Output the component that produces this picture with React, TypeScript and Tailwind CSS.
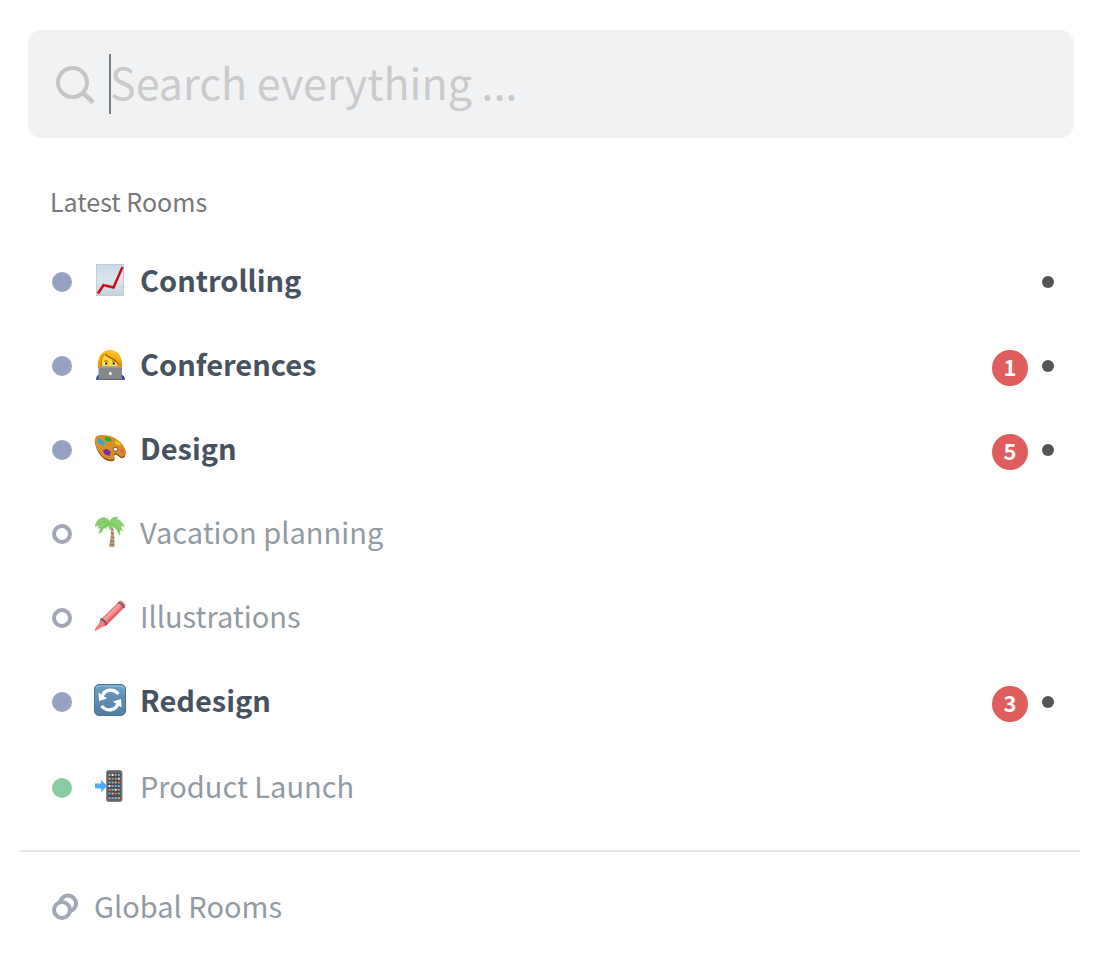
import type { ReactNode } from 'react';

type Status = 'team' | 'open' | 'live';

type Room = {
  name: string;
  status: Status;
  icon: ReactNode;
  unread?: boolean;
  mentions?: number;
};

const ChartIcon = () => (
  <svg viewBox="0 0 32 32" className="size-8 shrink-0" aria-hidden="true">
    <defs>
      <linearGradient id="chart-paper" x1="0" y1="0" x2="0" y2="1">
        <stop offset="0" stopColor="#c6d9e8" />
        <stop offset="0.5" stopColor="#dde7ef" />
        <stop offset="1" stopColor="#c3d0da" />
      </linearGradient>
    </defs>
    <rect x="2.5" y="0.5" width="27" height="31" fill="url(#chart-paper)" stroke="#c3cdd6" strokeWidth="1" />
    <path d="M9.5 1v30M16.500 1v30M23.500 1v30M3 8h26M3 16h26M3 24h26" stroke="#cfdae4" strokeWidth="0.5" />
    <path d="M4 29.500L9.500 21L19.500 23.500L28.500 3" fill="none" stroke="#cc0711" strokeWidth="2.400" />
  </svg>
);

const TechnologistIcon = () => (
  <svg viewBox="0 0 32 32" className="size-8 shrink-0" aria-hidden="true">
    <defs>
      <linearGradient id="hair" x1="0" y1="0" x2="0" y2="1">
        <stop offset="0" stopColor="#ffc928" />
        <stop offset="1" stopColor="#e58a00" />
      </linearGradient>
    </defs>
    <path d="M4 20C3 10 7 2 15.500 2C25 2 29 10 28 20z" fill="url(#hair)" />
    <path d="M7.500 18C6.500 11 9 8 11 7C14 11 21 10 24 16L23.500 20H8z" fill="#ffd83c" />
    <path d="M11 6C15 11 22 10 24.500 17" fill="none" stroke="#ad5b00" strokeWidth="1.300" />
    <path d="M10 6.500C7.500 9 7 13 7.500 18" fill="none" stroke="#bd6d00" strokeWidth="1" />
    <path d="M10 13.500q2-1.500 4 0M18 13.500q2-1.500 4 0" stroke="#a96800" fill="none" />
    <ellipse cx="12" cy="15.500" rx="1.900" ry="1.500" fill="#fff" />
    <ellipse cx="20" cy="15.500" rx="1.900" ry="1.500" fill="#fff" />
    <circle cx="12.200" cy="15.500" r="1.200" fill="#342517" />
    <circle cx="19.800" cy="15.500" r="1.200" fill="#342517" />
    <path d="M2 32Q2 27 6 26V32zM31 32Q31 27 26 26V32z" fill="#3148ad" />
    <rect x="4.500" y="18.500" width="23.500" height="13.500" rx="1.200" fill="#85878b" />
    <path d="M5 19h22.500" stroke="#a8aaac" />
    <ellipse cx="16.300" cy="25.500" rx="1.500" ry="1.700" fill="#eff1f2" />
    <path d="M3 31.500h26" stroke="#696b6f" />
  </svg>
);

const PaletteIcon = () => (
  <svg viewBox="0 0 32 32" className="size-8 shrink-0" aria-hidden="true">
    <path
      d="M1 10C0 5 5 3 10 3.500C19 4 28 10 31 18C33 24 30 27 27 26C24 25 24 22 21 23C18 24 23 28 19 29C10 31 2 20 1 10z"
      fill="#8f4c0c"
    />
    <path
      d="M1 9C0 4 5 2.500 10 3C19 3.500 28 9 31 17C33 22 30 25.500 27 24.500C24 23.500 24 20.500 21 21.500C18 23 23 26.500 19 27.500C10 29 2 19 1 9z"
      fill="#d68e2b"
    />
    <ellipse cx="21.500" cy="17.300" rx="2.500" ry="2" fill="#fff" stroke="#8f4c0c" />
    <path d="M3 9l2-2.500 3 1.500 3 3-1 2.500-4-1.500z" fill="#26a9d8" />
    <path d="M10 6.500l2.500-2 4.500 2 .5 3-4.500 0z" fill="#1fae22" />
    <path d="M20 10l3-1.500 3.500 3 0 2.500-4-1z" fill="#f6bf18" />
    <path d="M25.500 17l3.500 0 2 4-2.500 1z" fill="#f2604c" />
    <path d="M9 18l4-1 4 3-1.500 4-5-2z" fill="#7d26ad" />
  </svg>
);

const PalmIcon = () => (
  <svg viewBox="0 0 32 32" className="size-8 shrink-0" aria-hidden="true">
    <path d="M16 9C18 16 16.500 23 15 31h5.500C21 23 20 15 18 9z" fill="#bba080" />
    <path d="M17.500 13l2 .5M17 17l3 .5M17 21l3 .5M16 25l4 .5M16 28.500l4 .5" stroke="#806951" strokeWidth="1" />
    <path
      d="M16 5C13 1 8 0 5 3C2 5 1 8 1 11L5 9.500L3 13L6 12L4.500 18L8 16L10 12L12 13L14 10L16 14L19 11L22 13L24 17L26 20L26 14L29 16L27 10L31 11C29 7 27 4 23 3L24 1C20 0 17 2 16 5z"
      fill="#8bd06e"
    />
    <path d="M16 8C12 4 7 5 3 10M16 8C11 9 8 12 6 16M17 8C22 9 25 13 26 17" fill="none" stroke="#6dbb59" strokeWidth="0.800" />
  </svg>
);

const CrayonIcon = () => (
  <svg viewBox="0 0 32 32" className="size-8 shrink-0" aria-hidden="true">
    <path d="M6 20L25 1.500Q26 0 28 1L31 4Q32 6 31 7L12 26L8 27L5 29L1 31L1 29L3 26L5 24z" fill="#f27b7e" />
    <path d="M8 20L26 2.500L28 4.500L10 22z" fill="#f99b9d" />
    <path d="M11 25L29 7" stroke="#dc5e65" strokeWidth="1.500" />
    <path d="M6.500 19Q11 20 12.500 25M24 2.500Q29 4 30 8" fill="none" stroke="#70575f" strokeWidth="1.800" />
  </svg>
);

const RefreshIcon = () => (
  <svg viewBox="0 0 32 32" className="size-8 shrink-0" aria-hidden="true">
    <defs>
      <linearGradient id="button-face" x1="0" y1="0" x2="0" y2="1">
        <stop offset="0" stopColor="#6ba0c6" />
        <stop offset="1" stopColor="#4f7da3" />
      </linearGradient>
    </defs>
    <rect x="0.5" y="0.5" width="31" height="31" rx="4.500" fill="url(#button-face)" stroke="#477397" />
    <path d="M2 5Q2 2 5 2H27Q30 2 30 5" fill="none" stroke="#91bfdf" />
    <path d="M8 13C10 5 19 4 24.500 10" fill="none" stroke="#fff" strokeWidth="3.300" />
    <path d="M4.500 8.500L5 17L13 14.500z" fill="#fff" />
    <path d="M24 19C22 27 13 28 7.500 22" fill="none" stroke="#fff" strokeWidth="3.300" />
    <path d="M27.500 23.500L27 15L19 17.500z" fill="#fff" />
  </svg>
);

const appColors = ['#60d38c', '#65c9ee', '#f2f2f2', '#ebb173', '#bd8ece', '#ef7168', '#58bce9'];

const PhoneIcon = () => (
  <svg viewBox="0 0 32 32" className="size-8 shrink-0" aria-hidden="true">
    <rect x="12.500" y="0.500" width="15.500" height="31" rx="2" fill="#666465" stroke="#858383" />
    <rect x="14" y="3.500" width="12.500" height="24.500" fill="#4d4d50" />
    {[5, 8.700, 12.400, 16.100, 19.800, 23.500, 28].map((y, row) => (
      <g key={y}>
        {[0, 1, 2, 3].map((col) => (
          <rect
            key={col}
            x={14.500 + col * 3.100}
            y={y - 1}
            width="2"
            height="2"
            rx="0.400"
            fill={appColors[(row * 3 + col * 2) % 7]}
          />
        ))}
      </g>
    ))}
    <path d="M1 13.500H7V10L13.500 16L7 22V18.500H1z" fill="#52adf5" />
  </svg>
);

const rooms: Room[] = [
  { name: 'Controlling', status: 'team', icon: <ChartIcon />, unread: true },
  { name: 'Conferences', status: 'team', icon: <TechnologistIcon />, unread: true, mentions: 1 },
  { name: 'Design', status: 'team', icon: <PaletteIcon />, unread: true, mentions: 5 },
  { name: 'Vacation planning', status: 'open', icon: <PalmIcon /> },
  { name: 'Illustrations', status: 'open', icon: <CrayonIcon /> },
  { name: 'Redesign', status: 'team', icon: <RefreshIcon />, unread: true, mentions: 3 },
  { name: 'Product Launch', status: 'live', icon: <PhoneIcon /> },
];

const statusStyles: Record<Status, string> = {
  team: 'bg-[#96a3c0]',
  open: 'border-4 border-[#a1a8b3]',
  live: 'bg-[#89cca4]',
};

function RoomRow({ room }: { room: Room }) {
  return (
    <li className="last:pt-[2px]">
      <a href="#room" className="flex h-[84px] items-center">
        <span className={`size-5 shrink-0 rounded-full ${statusStyles[room.status]}`} />
        <span className="-mt-1 ml-[22px] flex">{room.icon}</span>
        <span
          className={`ml-[14px] grow pb-[6px] text-[29px] leading-10 ${
            room.unread ? 'font-bold text-[#475260]' : 'text-[#939ba2]'
          }`}
        >
          {room.name}
        </span>
        {room.mentions && (
          <span className="mt-1 flex size-9 items-center justify-center rounded-full bg-[#e05d5d] pb-1 text-[22px] leading-8 font-bold text-white">
            {room.mentions}
          </span>
        )}
        {room.unread && <span className="ml-[14px] size-3 rounded-full bg-[#555]" />}
      </a>
    </li>
  );
}

export default function App() {
  return (
    <main className="min-h-screen bg-white px-5 pt-[30px] pb-8 font-['Noto_Sans_CJK_SC',sans-serif]">
      <label className="mr-[6px] ml-2 flex h-[108px] items-center rounded-[14px] bg-[#f1f2f4] pr-6 pl-[27px]">
        <svg viewBox="0 0 40 40" className="size-10 shrink-0" fill="none" stroke="#c5c5c5" strokeWidth="4" aria-hidden="true">
          <circle cx="17.500" cy="18.500" r="14.500" />
          <path d="M27.500 28.500L38.300 38.500" strokeWidth="4.500" />
        </svg>
        <span className="relative ml-[15px] flex grow items-center">
          <span className="absolute -left-px h-[60px] w-[2px] bg-[#777b7e]" />
          <input
            type="text"
            aria-label="Search everything"
            placeholder="Search everything ..."
            className="h-[60px] w-full bg-transparent pb-[6px] text-[43px] text-[#475260] caret-transparent outline-none placeholder:text-[#cbcbcb]"
          />
        </span>
      </label>
      <section>
        <h2 className="mt-[43px] ml-[30px] text-[25px] leading-10 text-[#777]">Latest Rooms</h2>
        <ul className="mt-[19px] mr-[26px] mb-5 ml-8">
          {rooms.map((room) => (
            <RoomRow key={room.name} room={room} />
          ))}
        </ul>
      </section>
      <a href="#global" className="flex items-center border-t-2 border-[#e4e6ea] pt-[33px] pl-8 text-[29px] leading-10 text-[#939ba2]">
        <svg viewBox="0 0 28 28" className="mr-[14px] size-7 shrink-0" fill="none" stroke="#a1a8b3" strokeWidth="4" aria-hidden="true">
          <circle cx="16" cy="10.500" r="8" />
          <circle cx="10" cy="17" r="8" fill="#fff" />
        </svg>
        <span className="pb-1">Global Rooms</span>
      </a>
    </main>
  );
}
